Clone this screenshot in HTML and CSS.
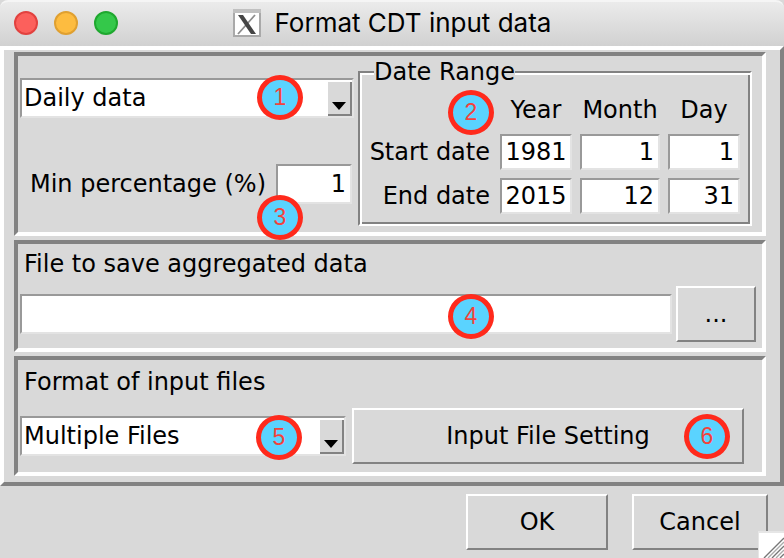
FILE: index.html
```html
<!DOCTYPE html>
<html lang="en">
<head>
<meta charset="utf-8">
<title>Format CDT input data</title>
<link rel="stylesheet" href="styles.css">
</head>
<body>
<header class="titlebar">
  <div class="lights">
    <button class="light close" aria-label="Close"></button>
    <button class="light minimize" aria-label="Minimize"></button>
    <button class="light maximize" aria-label="Zoom"></button>
  </div>
  <h1 class="title">
    <svg class="x-icon" viewBox="0 0 28 28" aria-hidden="true">
      <rect x="1" y="1" width="26" height="26" fill="#fff" stroke="#a9a9a9" stroke-width="2"/>
      <path d="M0 2H28" stroke="#c0c0c0" stroke-width="4"/>
      <path d="M22 6L5 25" stroke="#8c8c8c" stroke-width="1.8"/>
      <path d="M5 6H10L23 25H18Z" fill="#454545"/>
    </svg>
    <span>Format CDT input data</span>
  </h1>
</header>
<form class="dialog">
  <main class="body">
    <section class="panel period">
      <div class="settings">
        <div class="combo">
          <select aria-label="Time step"><option>Daily data</option></select>
          <span class="arrow"></span>
          <span class="badge in-combo-wide">1</span>
        </div>
        <div class="minimum">
          <label for="min">Min percentage (%)</label>
          <input class="entry" id="min" value="1">
          <span class="badge in-minimum">3</span>
        </div>
      </div>
      <fieldset class="range">
        <legend>Date Range</legend>
        <div class="dates">
          <span></span><span class="head">Year</span><span class="head">Month</span><span class="head">Day</span>
          <label for="start">Start date</label>
          <input class="entry year" id="start" value="1981">
          <input class="entry" aria-label="Start month" value="1">
          <input class="entry" aria-label="Start day" value="1">
          <label for="end">End date</label>
          <input class="entry year" id="end" value="2015">
          <input class="entry" aria-label="End month" value="12">
          <input class="entry" aria-label="End day" value="31">
        </div>
        <span class="badge in-range">2</span>
      </fieldset>
    </section>
    <section class="panel">
      <label class="caption" for="file">File to save aggregated data</label>
      <div class="row">
        <div class="file">
          <input class="entry" id="file">
          <span class="badge in-file">4</span>
        </div>
        <button type="button" class="button browse">...</button>
      </div>
    </section>
    <section class="panel source">
      <label class="caption" for="format">Format of input files</label>
      <div class="row format">
        <div class="combo">
          <select id="format"><option>Multiple Files</option></select>
          <span class="arrow"></span>
          <span class="badge in-combo">5</span>
        </div>
        <button type="button" class="button">Input File Setting<span class="badge in-button">6</span></button>
      </div>
    </section>
  </main>
  <footer class="actions">
    <button type="button" class="button ok">OK</button>
    <button type="button" class="button cancel">Cancel</button>
  </footer>
</form>
<svg class="grip" viewBox="0 0 26 27" aria-hidden="true">
  <path d="M0 0H26V27H0Z" fill="#fff"/>
  <path d="M0 27V1H26" fill="none" stroke="#e6e6e6" stroke-width="2"/>
  <path d="M6 27L26 7M14 27L26 15M22 27L26 23" stroke="#777" stroke-width="1.4"/>
  <path d="M10 27L26 11M18 27L26 19" stroke="#aaa" stroke-width="1.4"/>
</svg>
</body>
</html>
```
FILE: styles.css
```css
* {
  box-sizing: border-box;
}

:root {
  --face: #d9d9d9;
  --dark: #828282;
  --light: #fff;
}

body {
  margin: 0;
  min-height: 100vh;
  position: relative;
  overflow: hidden;
  background: var(--face);
  color: #000;
  font: 24px/28px "DejaVu Sans", sans-serif;
}

input, select, button {
  font: inherit;
  color: inherit;
  border-radius: 0;
}

.titlebar {
  display: grid;
  grid-template-columns: 1fr auto 1fr;
  align-items: center;
  height: 46px;
  padding: 0 14px 2px;
  border-top: 2px solid #f5f5f5;
  border-radius: 8px 8px 0 0;
  background: linear-gradient(#ebebeb, #d1d1d1);
}

.lights {
  display: flex;
  gap: 16px;
}

.light {
  width: 24px;
  height: 24px;
  padding: 0;
  border: 2px solid #e2423f;
  border-radius: 50%;
  background: #fc605c;
}

.minimize {
  border-color: #e0a030;
  background: #fdbc40;
}

.maximize {
  border-color: #1fa82f;
  background: #34c84a;
}

.title {
  display: flex;
  align-items: center;
  gap: 14px;
  margin: 0;
  font: 26px/32px Inter, sans-serif;
}

.x-icon {
  width: 28px;
  height: 28px;
}

.body {
  display: grid;
  gap: 4px;
  padding: 2px 14px 6px 10px;
  border: 4px solid;
  border-color: var(--light) var(--dark) var(--dark) var(--light);
}

.panel {
  padding: 2px;
  border: 4px solid;
  border-color: var(--dark) var(--light) var(--light) var(--dark);
}

.period {
  display: grid;
  grid-template-columns: 334px 1fr;
  gap: 4px;
  padding: 0 10px 6px 2px;
}

.source {
  padding-top: 4px;
}

.settings {
  display: grid;
  align-content: start;
  gap: 46px;
  padding-top: 22px;
}

.entry {
  width: 100%;
  min-width: 0;
  height: 36px;
  padding: 0 4px;
  border: 2px solid;
  border-color: #999 #e3e3e3 #e3e3e3 #999;
  background: #fff;
  text-align: right;
}

.year {
  padding: 0 2px;
  text-align: center;
}

.combo {
  position: relative;
  display: flex;
  height: 40px;
  padding: 2px 0 2px 2px;
  border: 2px solid;
  border-color: #999 #e3e3e3 #e3e3e3 #999;
  background: #fff;
}

.combo select {
  flex: 1;
  min-width: 0;
  height: 32px;
  padding: 0;
  border: 0;
  appearance: none;
  background: none;
}

.arrow {
  display: flex;
  flex: none;
  align-items: flex-end;
  justify-content: center;
  width: 24px;
  height: 34px;
  padding-bottom: 4px;
  border: solid var(--dark);
  border-width: 0 2px 2px 0;
  background: var(--face);
}

.arrow::before {
  content: "";
  border: solid transparent;
  border-width: 8px 7px 0;
  border-top-color: #000;
}

.minimum {
  position: relative;
  display: flex;
  align-items: center;
  justify-content: flex-end;
  gap: 10px;
  padding-right: 2px;
}

.minimum .entry {
  width: 76px;
  height: 40px;
}

.range {
  position: relative;
  min-width: 0;
  margin: 2px 0 0;
  padding: 0 10px 10px 6px;
  border: 2px solid;
  border-color: var(--dark) var(--light) var(--light) var(--dark);
  box-shadow: inset 2px 2px var(--light), inset -2px -2px var(--dark);
}

.range legend {
  margin-left: 8px;
  padding: 0;
  background: var(--face);
}

.dates {
  display: grid;
  grid-template-columns: 1fr 72px 80px 72px;
  grid-template-rows: 30px 36px 36px;
  align-items: center;
  gap: 8px;
  padding-top: 10px;
  text-align: right;
}

.dates label {
  padding-right: 2px;
}

.head {
  align-self: start;
  text-align: center;
}

.caption {
  display: block;
  width: max-content;
  padding: 4px 4px 0;
}

.row {
  display: flex;
  align-items: center;
  gap: 4px;
  padding: 8px 4px 4px 0;
}

.format {
  display: grid;
  grid-template-columns: 326fr 392fr;
  gap: 6px;
  padding: 12px 16px 6px 0;
}

.file {
  position: relative;
  display: flex;
  flex: 1;
}

.file .entry {
  height: 40px;
  text-align: left;
}

.button {
  position: relative;
  height: 56px;
  padding: 0;
  border: 2px solid;
  border-color: var(--light) var(--dark) var(--dark) var(--light);
  background: var(--face);
}

.browse {
  width: 80px;
}

.actions {
  display: flex;
  justify-content: flex-end;
  gap: 24px;
  padding: 8px 16px;
}

.ok {
  width: 142px;
}

.cancel {
  width: 136px;
}

.badge {
  position: absolute;
  width: 46px;
  height: 45px;
  border: 5px solid #ff2a1c;
  border-radius: 50%;
  background: #5ad3ff;
  color: #f4423c;
  font: 23px/35px "Liberation Sans", sans-serif;
  text-align: center;
}

.in-combo-wide {
  right: 49px;
  top: -5px;
}

.in-combo {
  right: 42px;
  top: -3px;
}

.in-minimum {
  right: 51px;
  top: 31px;
}

.in-range {
  left: 88px;
  top: 4px;
}

.in-file {
  right: 178px;
  top: 0;
}

.in-button {
  right: 12px;
  top: 4px;
}

.grip {
  position: absolute;
  right: 0;
  bottom: 0;
  width: 26px;
  height: 27px;
}
```
